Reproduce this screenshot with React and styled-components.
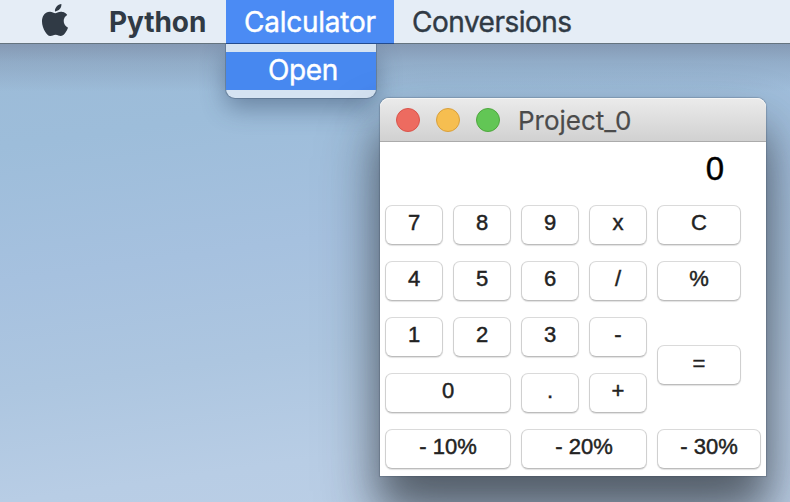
import React from "react";
import styled, { createGlobalStyle } from "styled-components";
import { SiApple } from "react-icons/si";

const GlobalStyle = createGlobalStyle`
  *, *::before, *::after { box-sizing: border-box; }
  body { margin: 0; overflow: hidden; }
`;

const Desktop = styled.div`
  position: relative;
  width: 790px;
  height: 502px;
  overflow: hidden;
  font-family: Inter, "Liberation Sans", sans-serif;
  background:
    linear-gradient(180deg, transparent 43px, rgba(110, 120, 145, 0.5) 44px, rgba(115, 130, 155, 0.28) 62px, rgba(120, 140, 160, 0) 92px),
    linear-gradient(172deg, #9cbad6 0%, #9dbdda 24%, #a6c1df 46%, #adc6e0 64%, #b8cde5 82%, #bccfe6 100%);
`;

const MenuBar = styled.nav`
  display: flex;
  align-items: stretch;
  height: 44px;
  background: #e5edf6;
  border-bottom: 1px solid #65747f;
  color: #303a45;
`;

const AppleMark = styled.div`
  width: 91px;
  padding: 4px 0 0 39px;
  svg { display: block; width: 32px; height: 32px; }
`;

const MenuTitle = styled.div`
  width: ${(p) => p.$width}px;
  margin-bottom: -1px;
  padding-left: 18px;
  border-bottom: 1px solid ${(p) => (p.$active ? "#234b8e" : "transparent")};
  background: ${(p) => (p.$active ? "#4b8bf4" : "transparent")};
  color: ${(p) => (p.$active ? "#fff" : "inherit")};
  font-size: 28px;
  font-weight: ${(p) => (p.$strong ? 700 : 400)};
  -webkit-text-stroke: ${(p) => (p.$strong ? 0 : "0.4px")};
  letter-spacing: ${(p) => p.$tracking || 0}px;
  line-height: 45px;
  white-space: nowrap;
`;

const Dropdown = styled.div`
  position: absolute;
  left: 226px;
  top: 44px;
  width: 150px;
  height: 54px;
  padding: 8px 0;
  border-radius: 0 0 9px 9px;
  background: #d5e3f2;
  box-shadow: 0 0 0 1px rgba(70, 90, 115, 0.42), 0 10px 24px rgba(45, 65, 95, 0.45);
  clip-path: inset(0 -50px -50px -50px);
`;

const DropdownItem = styled.div`
  height: 38px;
  padding-left: 42px;
  background: #4788f0;
  color: #fff;
  font-size: 28px;
  letter-spacing: -0.4px;
  line-height: 37px;
  -webkit-text-stroke: 0.4px #fff;
`;

const Window = styled.section`
  position: absolute;
  left: 380px;
  top: 98px;
  width: 386px;
  height: 378px;
  background: #fff;
  border-radius: 9px 9px 0 0;
  box-shadow:
    0 0 1px 1px rgba(50, 65, 85, 0.25),
    0 32px 40px rgba(35, 40, 44, 0.5),
    0 36px 64px rgba(40, 48, 58, 0.38);
`;

const TitleBar = styled.header`
  display: flex;
  align-items: center;
  gap: 16px;
  height: 44px;
  padding-left: 16px;
  border-radius: 9px 9px 0 0;
  border-bottom: 1px solid #ababab;
  background: linear-gradient(#ebebeb, #d1d1d1);
  box-shadow: inset 0 1px 0 #f5f5f5;
`;

const Light = styled.span`
  width: 24px;
  height: 24px;
  border-radius: 50%;
  border: 1px solid ${(p) => p.$edge};
  background: ${(p) => p.$fill};
`;

const Title = styled.h1`
  margin: 2px 0 0 2px;
  color: #4b4b4b;
  font-size: 26px;
  font-weight: 400;
  line-height: 40px;
  -webkit-text-stroke: 0.2px #4b4b4b;
`;

const Display = styled.output`
  display: block;
  height: 63px;
  padding: 0 42px 0 0;
  color: #000;
  font-family: "Liberation Sans", sans-serif;
  font-size: 33px;
  line-height: 54px;
  text-align: right;
  -webkit-text-stroke: 0.4px #000;
`;

const Keypad = styled.div`
  display: grid;
  grid-template-columns: repeat(4, 58px) 104px;
  grid-auto-rows: 40px;
  gap: 16px 10px;
  padding-left: 5px;
`;

const Key = styled.button`
  grid-column: span ${(p) => p.$cols || 1};
  grid-row: span ${(p) => p.$rows || 1};
  align-self: center;
  width: ${(p) => (p.$width ? `${p.$width}px` : "100%")};
  height: 40px;
  padding: 0 0 ${(p) => (p.$rows ? 3 : 5)}px;
  border: 1px solid;
  border-color: #dadada #d0d0d0 #bcbcbc;
  border-radius: 7px;
  background: #fff;
  box-shadow: 0 1px 1px rgba(0, 0, 0, 0.12);
  color: #222;
  font-family: "Liberation Sans", sans-serif;
  font-size: 22px;
  line-height: 32px;
  -webkit-text-stroke: 0.45px #222;
`;

const keys = [
  { label: "7" }, { label: "8" }, { label: "9" }, { label: "x" }, { label: "C", width: 84 },
  { label: "4" }, { label: "5" }, { label: "6" }, { label: "/" }, { label: "%", width: 84 },
  { label: "1" }, { label: "2" }, { label: "3" }, { label: "-" }, { label: "=", width: 84, rows: 2 },
  { label: "0", cols: 2 }, { label: "." }, { label: "+" },
  { label: "- 10%", cols: 2 }, { label: "- 20%", cols: 2 }, { label: "- 30%" },
];

export default function App() {
  return (
    <>
      <GlobalStyle />
      <Desktop>
        <MenuBar>
          <AppleMark><SiApple /></AppleMark>
          <MenuTitle $width={135} $strong $tracking={-0.1}>Python</MenuTitle>
          <MenuTitle $width={168} $active $tracking={-0.25}>Calculator</MenuTitle>
          <MenuTitle $width={190} $tracking={-0.5}>Conversions</MenuTitle>
        </MenuBar>
        <Dropdown>
          <DropdownItem>Open</DropdownItem>
        </Dropdown>
        <Window>
          <TitleBar>
            <Light $fill="#ed6b60" $edge="#d9544b" />
            <Light $fill="#f6be50" $edge="#d9a03c" />
            <Light $fill="#62c655" $edge="#4fa73e" />
            <Title>Project_0</Title>
          </TitleBar>
          <Display>0</Display>
          <Keypad>
            {keys.map((k) => (
              <Key key={k.label} $cols={k.cols} $rows={k.rows} $width={k.width}>{k.label}</Key>
            ))}
          </Keypad>
        </Window>
      </Desktop>
    </>
  );
}
